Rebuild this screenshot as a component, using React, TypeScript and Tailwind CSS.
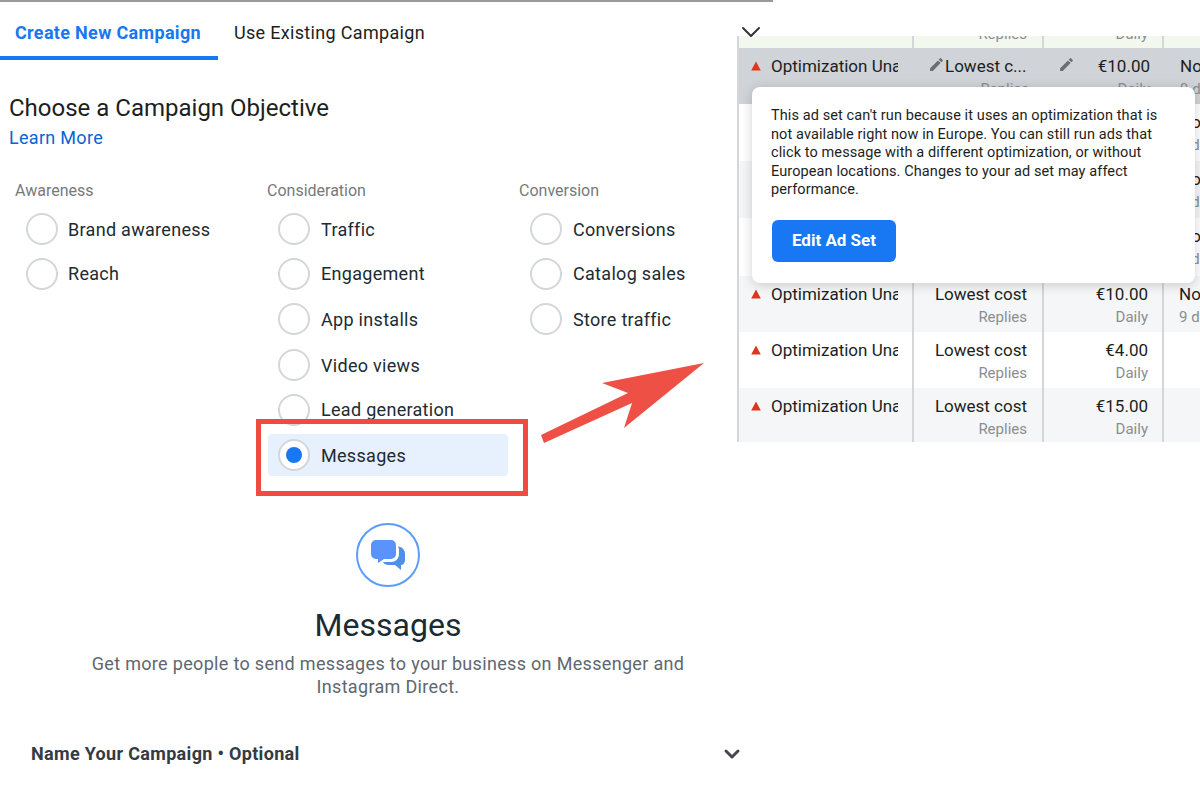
import { ChevronDown } from "lucide-react";

const columns = [
	{
		title: "Awareness",
		gap: "gap-[10px]",
		options: [
			{ label: "Brand awareness", row: "h-[44px]" },
			{ label: "Reach", row: "h-[45px]" },
		],
	},
	{
		title: "Consideration",
		gap: "gap-[11px]",
		options: [
			{ label: "Traffic", row: "h-[44px]" },
			{ label: "Engagement", row: "h-[45px]" },
			{ label: "App installs", row: "h-[46px]" },
			{ label: "Video views", row: "h-[46px]" },
			{ label: "Lead generation", row: "h-[43px]" },
		],
	},
	{
		title: "Conversion",
		gap: "gap-[11px]",
		options: [
			{ label: "Conversions", row: "h-[44px]" },
			{ label: "Catalog sales", row: "h-[45px]" },
			{ label: "Store traffic", row: "h-[46px]" },
		],
	},
];

// the first three sit under the tooltip, only their right edge shows
const rows = [
	{ height: "h-[57px]", bg: "bg-white", budget: "€10.00", tail: "No", sub: "9 d", covered: true },
	{ height: "h-[57px]", bg: "bg-[#f5f6f7]", budget: "€10.00", tail: "No", sub: "9 d", covered: true },
	{ height: "h-[58px]", bg: "bg-white", budget: "€10.00", tail: "No", sub: "9 d", covered: true },
	{ height: "h-[56px]", bg: "bg-[#f5f6f7]", budget: "€10.00", tail: "No", sub: "9 d", covered: false },
	{ height: "h-[56px]", bg: "bg-white", budget: "€4.00", tail: "", sub: "", covered: false },
	{ height: "h-[54px]", bg: "bg-[#f5f6f7]", budget: "€15.00", tail: "", sub: "", covered: false },
];

function Warning() {
	return (
		<svg viewBox="0 0 10 10" className="w-[10px] h-[10px] shrink-0 mt-[5px] text-[#e0341e]">
			<path d="M5 .5 9.8 9.500H.2z" fill="currentColor" />
		</svg>
	);
}

function Pencil({ className }: { className: string }) {
	return (
		<svg viewBox="0 0 24 24" className={className} fill="#6b6f75">
			<path d="M3 17.25V21h3.75L17.81 9.94l-3.75-3.75L3 17.25zM20.71 7.04a1 1 0 0 0 0-1.41l-2.34-2.34a1 1 0 0 0-1.41 0l-1.83 1.83 3.75 3.75 1.83-1.83z" />
		</svg>
	);
}

function Radio({ checked }: { checked?: boolean }) {
	return (
		<span className="w-[32px] h-[32px] rounded-full border-2 border-[#d4d6d9] bg-white flex items-center justify-center shrink-0">
			{checked && <span className="w-[16px] h-[16px] rounded-full bg-[#1877f2]" />}
		</span>
	);
}

function AdRow({ row }: { row: (typeof rows)[number] }) {
	return (
		<div className={`flex ${row.height} ${row.bg} text-[17px] leading-[20px] text-[#1c1e21]`}>
			<div className="w-[175px] shrink-0 flex items-start gap-[10px] pl-[12px] pt-[8px] border-r-2 border-[#d4d6d9]">
				{!row.covered && <Warning />}
				{!row.covered && <span className="w-[127px] overflow-hidden whitespace-nowrap">Optimization Unavailable</span>}
			</div>
			<div className="w-[130px] shrink-0 pt-[8px] pr-[15px] text-right border-r-2 border-[#d4d6d9]">
				{!row.covered && <div>Lowest cost</div>}
				{!row.covered && <div className="mt-[3px] text-[15px] text-[#8a8d91]">Replies</div>}
			</div>
			<div className="w-[120px] shrink-0 pt-[8px] pr-[14px] text-right border-r-2 border-[#d4d6d9]">
				{!row.covered && <div>{row.budget}</div>}
				{!row.covered && <div className="mt-[3px] text-[15px] text-[#8a8d91]">Daily</div>}
			</div>
			<div className="flex-1 pt-[8px] pl-[15px] whitespace-nowrap">
				<div>{row.tail}</div>
				<div className="mt-[3px] text-[15px] text-[#8a8d91]">{row.sub}</div>
			</div>
		</div>
	);
}

export default function App() {
	return (
		<div className="relative w-[1200px] h-[806px] overflow-hidden bg-white font-['Roboto',sans-serif]">
			<div className="w-[773px] h-[2px] bg-[#999999]" />
			<div className="flex">
				{/* Campaign form */}
				<div className="w-[736px] shrink-0">
					<div className="flex h-[58px] text-[18px] leading-[22px] tracking-[0.32px]">
						<div className="w-[218px] pl-[15px] pt-[20px] font-bold text-[#1877f2] border-b-4 border-[#1877f2]">
							Create New Campaign
						</div>
						<div className="pl-[16px] pt-[20px] text-[#1c1e21]">Use Existing Campaign</div>
					</div>

					<h1 className="mt-[32px] pl-[9px] text-[24px] leading-[32px] text-[#1c1e21]">
						Choose a Campaign Objective
					</h1>
					<div className="pl-[9px] text-[18px] leading-[24px] tracking-[0.3px] text-[#0a64d2] mt-[2px]">Learn More</div>

					<div className="mt-[30px] pl-[15px] grid grid-cols-[252px_252px_217px] tracking-[0.3px]">
						{columns.map((col) => (
							<div key={col.title}>
								<div className="text-[16px] leading-[22px] tracking-normal text-[#77797d] mb-[5px]">{col.title}</div>
								{col.options.map((opt) => (
									<div key={opt.label} className={`flex items-center pl-[11px] text-[18px] text-[#1c2b33] ${col.gap} ${opt.row}`}>
										<Radio />
										{opt.label}
									</div>
								))}
								{col.title === "Consideration" && (
									<div className="mt-[3px] ml-px w-[240px] h-[42px] flex items-center gap-[11px] pl-[10px] rounded-[4px] bg-[#e7f1fd] text-[18px] text-[#1c2b33]">
										<Radio checked />
										Messages
									</div>
								)}
							</div>
						))}
					</div>
				</div>

				{/* Ad set table */}
				<div className="flex-1 min-w-0 pt-[26px]">
					<ChevronDown size={32} strokeWidth={1.5} className="-ml-px -mt-[12px] -mb-[13px] text-[#333]" />
					<div className="ml-px border-l-2 border-[#d4d6d9] mt-[1px]">
						<div className="flex h-[12px] overflow-hidden bg-[#f3f8ee] text-[15px] leading-[15px] text-[#8a8d91]">
							<div className="w-[175px] shrink-0 border-r-2 border-[#d4d6d9]" />
							<div className="w-[130px] shrink-0 pr-[15px] text-right border-r-2 border-[#d4d6d9] -mt-[9px]">Replies</div>
							<div className="w-[120px] shrink-0 pr-[14px] text-right border-r-2 border-[#d4d6d9] -mt-[9px]">Daily</div>
						</div>
						<div className="flex h-[56px] bg-[#d0d3d7] text-[17px] leading-[20px] text-[#1c1e21]">
							<div className="w-[175px] shrink-0 flex items-start gap-[10px] pl-[12px] pt-[8px]">
								<Warning />
								<span className="w-[127px] overflow-hidden whitespace-nowrap">Optimization Unavailable</span>
							</div>
							<div className="w-[130px] shrink-0 pt-[8px] pl-[14px]">
								<div className="flex items-start">
									<Pencil className="w-[17px] h-[17px] shrink-0" />
									<span>Lowest c...</span>
								</div>
								<div className="mt-[3px] pr-[15px] text-right text-[15px] text-[#8a8d91]">Replies</div>
							</div>
							<div className="w-[120px] shrink-0 pt-[8px] pl-[14px] pr-[14px]">
								<div className="flex justify-between">
									<Pencil className="w-[17px] h-[17px]" />
									<span>€10.00</span>
								</div>
								<div className="mt-[3px] text-right text-[15px] text-[#8a8d91]">Daily</div>
							</div>
							<div className="flex-1 pt-[8px] pl-[16px]">
								<div>No</div>
								<div className="mt-[3px] text-[15px] text-[#8a8d91]">9 d</div>
							</div>
						</div>
						{rows.map((row, i) => (
							<AdRow key={i} row={row} />
						))}
					</div>
				</div>
			</div>

			{/* Messages detail */}
			<div className="absolute left-0 top-[523px] w-[776px] flex flex-col items-center">
				<div className="w-[64px] h-[64px] rounded-full border-2 border-[#5d9cfb] flex items-center justify-center">
					<svg viewBox="0 0 40 40" className="w-[40px] h-[40px]">
						<path d="M30 11.500C34.500 12 37 15 37 19v6c0 3-2 5-4 5v5l-6-5h-6c-3 0-5-1-6-3h8c4.500 0 8-3.500 8-8v-4c0-1-.5-2.500-1-3.500z" fill="#4f8fea" />
						<path d="M8 5h15a5 5 0 0 1 5 5v9a5 5 0 0 1-5 5h-7l-6 4v-4H8a5 5 0 0 1-5-5v-9a5 5 0 0 1 5-5z" fill="#5a93fb" />
					</svg>
				</div>
				<h2 className="mt-[18px] text-[32px] leading-[40px] text-[#1c2b33]">Messages</h2>
				<p className="mt-[7px] w-[640px] text-center text-[18px] leading-[23px] tracking-[0.32px] text-[#606770]">
					Get more people to send messages to your business on Messenger and Instagram Direct.
				</p>
			</div>

			<div className="absolute left-[31px] top-[742px] w-[713px] flex items-center justify-between text-[18px] leading-[24px] tracking-[0.32px] font-bold text-[#333b44]">
				Name Your Campaign • Optional
				<ChevronDown size={24} strokeWidth={3} className="text-[#444950]" />
			</div>

			{/* Error tooltip */}
			<div className="absolute left-[752px] top-[87px] w-[443px] h-[196px] rounded-[8px] bg-white shadow-[0_2px_12px_rgba(0,0,0,0.18)] pl-[19px] pt-[20px]">
				<p className="w-[400px] text-[14.5px] leading-[18.6px] tracking-[0.1px] text-[#1c1e21]">
					This ad set can't run because it uses an optimization that is not available right now in Europe. You can still run ads that click to message with a different optimization, or without European locations. Changes to your ad set may affect performance.
				</p>
				<button type="button" className="mt-[20px] ml-px w-[124px] h-[42px] rounded-[6px] bg-[#1877f2] text-white text-[17px] font-bold">
					Edit Ad Set
				</button>
			</div>

			{/* Annotation */}
			<div className="absolute left-[256px] top-[419px] w-[272px] h-[77px] border-[5px] border-[#ef4b41]" />
			<svg className="absolute left-[530px] top-[350px] w-[190px] h-[100px]" viewBox="530 350 190 100">
				<polygon points="704,363 602,383 628,393 541,435 544,443 632,403 624,428" fill="#ef5046" />
			</svg>
		</div>
	);
}
